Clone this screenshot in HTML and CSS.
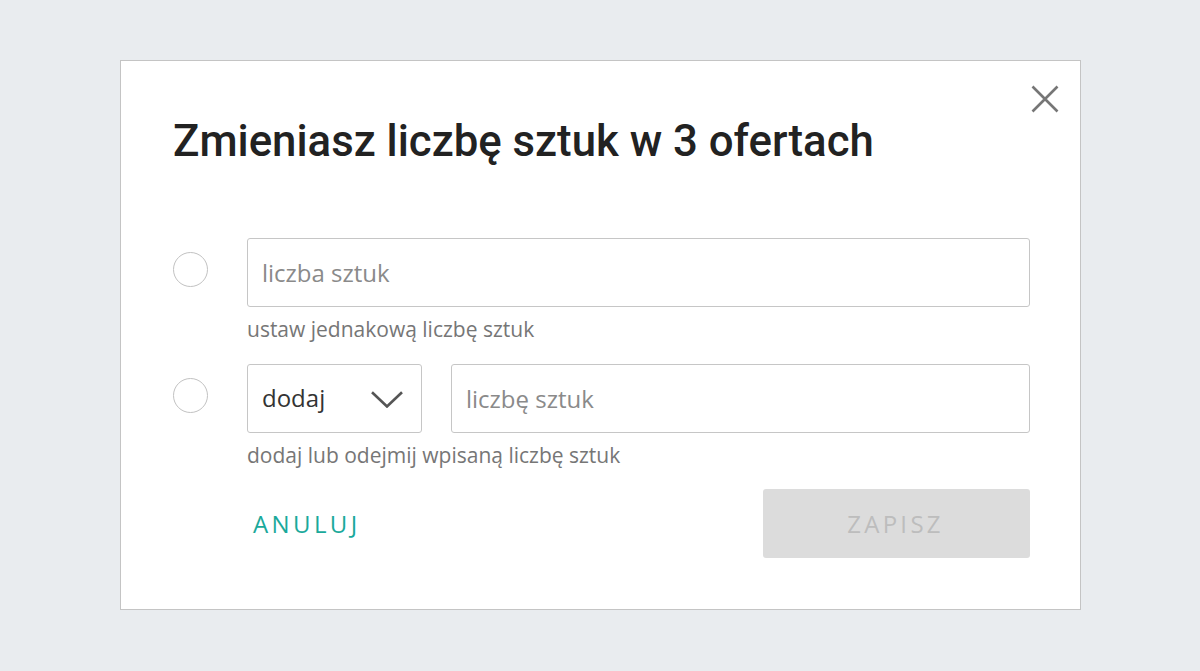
FILE: index.html
```html
<!DOCTYPE html>
<html lang="pl">
<head>
<meta charset="utf-8">
<title>Zmieniasz liczbę sztuk</title>
<link rel="stylesheet" href="styles.css">
</head>
<body>
<div class="modal">
  <button class="close" aria-label="Zamknij">
    <svg width="28" height="28" viewBox="0 0 28 28"><path d="M1.5 1.5 L26.5 26.5 M26.5 1.5 L1.5 26.5" stroke="#767676" stroke-width="2.6" fill="none"/></svg>
  </button>
  <h1 class="title">Zmieniasz liczbę sztuk w 3 ofertach</h1>

  <div class="option">
    <span class="radio"></span>
    <div class="option-body">
      <div class="fields">
        <input class="field field-wide" type="text" placeholder="liczba sztuk">
      </div>
      <p class="hint">ustaw jednakową liczbę sztuk</p>
    </div>
  </div>

  <div class="option">
    <span class="radio"></span>
    <div class="option-body">
      <div class="fields">
        <div class="select">
          <span class="select-value">dodaj</span>
          <svg class="chevron" width="32" height="17" viewBox="0 0 32 17"><path d="M1 1.2 L16 15.5 L31 1.2" stroke="#555" stroke-width="2.6" fill="none"/></svg>
        </div>
        <input class="field field-wide" type="text" placeholder="liczbę sztuk">
      </div>
      <p class="hint">dodaj lub odejmij wpisaną liczbę sztuk</p>
    </div>
  </div>

  <div class="actions">
    <button class="btn-cancel">ANULUJ</button>
    <button class="btn-save" disabled>ZAPISZ</button>
  </div>
</div>
</body>
</html>
```

FILE: styles.css
```css
* { box-sizing: border-box; }

html, body {
  margin: 0;
  padding: 0;
}

body {
  background: #e9ecef;
  font-family: "Open Sans", "Liberation Sans", sans-serif;
  padding: 60px 120px 0 120px;
  height: 671px;
}

.modal {
  position: relative;
  width: 961px;
  height: 550px;
  background: #fff;
  border: 1px solid #c4c4c4;
  padding: 54px 50px 0 52px;
}

.close {
  position: absolute;
  top: 24px;
  right: 21px;
  width: 28px;
  height: 28px;
  padding: 0;
  border: 0;
  background: none;
  display: block;
}
.close svg { display: block; }

.title {
  margin: 0 0 71px 0;
  font-family: Roboto, "Liberation Sans", sans-serif;
  font-weight: 500;
  font-size: 43.75px;
  line-height: 52px;
  color: #222;
  letter-spacing: 0;
}

.option {
  display: flex;
  align-items: flex-start;
  margin-bottom: 21px;
}

.radio {
  flex: none;
  width: 35px;
  height: 35px;
  border: 1.3px solid #c2c2c2;
  border-radius: 50%;
  margin-top: 14px;
  margin-right: 39px;
}

.option-body {
  flex: 1;
}

.fields {
  display: flex;
  gap: 29px;
}

.field {
  height: 69px;
  border: 1px solid #c6c6c6;
  border-radius: 3px;
  padding: 0 14px;
  font-family: "Open Sans", "Liberation Sans", sans-serif;
  font-size: 24px;
  color: #333;
  background: #fff;
  outline: none;
}
.field::placeholder { color: #8a8a8a; }

.field-wide { flex: 1; min-width: 0; }

.select {
  flex: none;
  width: 175px;
  height: 69px;
  border: 1px solid #c6c6c6;
  border-radius: 3px;
  padding: 0 18px 0 14px;
  display: flex;
  align-items: center;
  justify-content: space-between;
}
.select-value {
  font-size: 24px;
  color: #333;
  line-height: 1;
  margin-top: -2px;
}
.chevron { display: block; margin-top: 1px; }

.hint {
  margin: 8px 0 0 0;
  font-size: 21px;
  line-height: 28px;
  color: #767676;
}

.actions {
  display: flex;
  align-items: center;
  justify-content: space-between;
  margin-top: -1px;
  padding-left: 74px;
}

.btn-cancel {
  border: 0;
  background: none;
  padding: 0 0 0 6px;
  font-family: "Open Sans", "Liberation Sans", sans-serif;
  font-size: 24px;
  letter-spacing: 3.4px;
  color: #1aa99b;
  font-weight: 400;
}

.btn-save {
  width: 267px;
  height: 69px;
  border: 0;
  border-radius: 3px;
  background: #dcdcdc;
  color: #bdbdbd;
  font-family: "Open Sans", "Liberation Sans", sans-serif;
  font-size: 24px;
  letter-spacing: 3.3px;
  padding: 0 2px 0 0;
}
```
